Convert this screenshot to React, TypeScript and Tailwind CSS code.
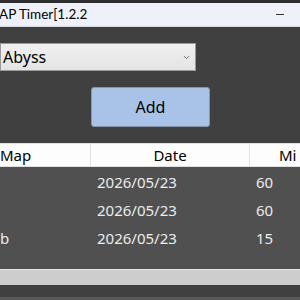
import { ChevronDown } from 'lucide-react';

const rows = [
  { map: '', date: '2026/05/23', min: '60' },
  { map: '', date: '2026/05/23', min: '60' },
  { map: 'b', date: '2026/05/23', min: '15' },
];

export default function App() {
  return (
    <div
      className="flex h-[300px] w-[300px] flex-col overflow-hidden bg-[#404040]"
      style={{ fontFamily: '"Noto Sans", "Open Sans", sans-serif' }}
    >
      <div className="h-[3px] shrink-0 bg-[#2e2e2e]" />
      <div className="flex h-[24px] shrink-0 items-center justify-between border-b border-[#d8dae2] bg-[#eff1fa] pr-[16px]">
        <span className="-ml-[1px] font-['Lato',sans-serif] text-[13.5px] leading-none text-black">AP Timer[1.2.2</span>
        <span className="mb-[1px] block h-[1px] w-[8px] bg-[#333]" />
      </div>

      <div className="mt-[16px] flex h-[28px] w-[196px] items-center justify-between border border-[#9a9a9a] bg-gradient-to-b from-[#f0f0f0] to-[#e4e4e4] pl-[2px] pr-[4px]">
        <span className="text-[16px] leading-none text-black">Abyss</span>
        <ChevronDown size={9} strokeWidth={2} className="text-[#444]" />
      </div>

      <div className="mt-[16px] flex justify-center pl-[1px]">
        <button className="flex h-[40px] w-[119px] items-center justify-center rounded-[3px] border border-[#8796ab] bg-[#a9c2e8] text-[16px] text-black">
          Add
        </button>
      </div>

      <div className="mt-[16px] flex h-[24px] shrink-0 items-center border-y border-[#e0e0e0] bg-[#fdfdfd] text-[15px] leading-none text-black">
        <div className="w-[91px] border-r border-[#e2e2e2] leading-[22px]">Map</div>
        <div className="w-[159px] border-r border-[#e2e2e2] text-center leading-[22px]">Date</div>
        <div className="flex-1 pl-[29px] leading-[22px]">Mi</div>
      </div>

      <div className="flex h-[102px] shrink-0 flex-col bg-[#505050] pt-[1px] text-[15px] text-[#ececec]">
        {rows.map((r, i) => (
          <div key={i} className="flex h-[28px] items-center">
            <div className="w-[97px]">{r.map}</div>
            <div className="w-[159px]">{r.date}</div>
            <div className="flex-1">{r.min}</div>
          </div>
        ))}
      </div>

      <div className="h-[16px] shrink-0 border-t border-[#e4e4e4] bg-[#cdcdcd]" />
      <div className="flex-1" />
      <div className="h-[3px] shrink-0 bg-[#5a5a5a]" />
    </div>
  );
}
